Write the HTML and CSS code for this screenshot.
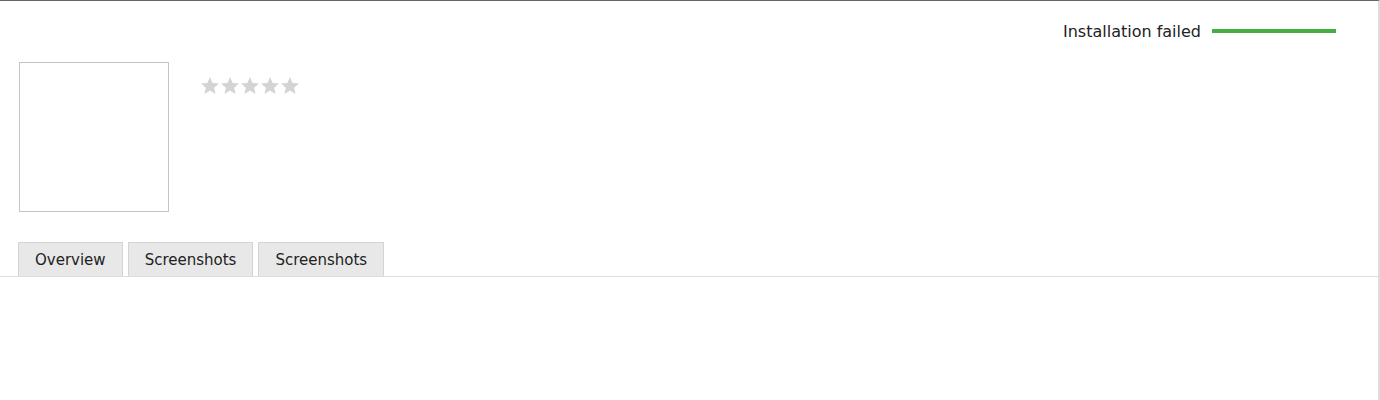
FILE: index.html
```html
<!DOCTYPE html>
<html lang="en">
<head>
    <meta charset="UTF-8">
    <meta name="viewport" content="width=device-width, initial-scale=1.0">
    <title>Package details</title>
    <link rel="stylesheet" href="styles.css">
</head>
<body>
    <div class="page">
        <div class="status">
            <span class="status-text">Installation failed</span>
            <div class="progress"><div class="progress-bar" style="width: 100%"></div></div>
        </div>

        <div class="header">
            <div class="thumb"></div>
            <div class="rating">
                <svg class="star" viewBox="2 2 20 19"><path d="M12 2l2.9 6.6 7.1.6-5.4 4.7 1.6 7-6.2-3.7-6.2 3.7 1.6-7L2 9.2l7.1-.6z"/></svg>
                <svg class="star" viewBox="2 2 20 19"><path d="M12 2l2.9 6.6 7.1.6-5.4 4.7 1.6 7-6.2-3.7-6.2 3.7 1.6-7L2 9.2l7.1-.6z"/></svg>
                <svg class="star" viewBox="2 2 20 19"><path d="M12 2l2.9 6.6 7.1.6-5.4 4.7 1.6 7-6.2-3.7-6.2 3.7 1.6-7L2 9.2l7.1-.6z"/></svg>
                <svg class="star" viewBox="2 2 20 19"><path d="M12 2l2.9 6.6 7.1.6-5.4 4.7 1.6 7-6.2-3.7-6.2 3.7 1.6-7L2 9.2l7.1-.6z"/></svg>
                <svg class="star" viewBox="2 2 20 19"><path d="M12 2l2.9 6.6 7.1.6-5.4 4.7 1.6 7-6.2-3.7-6.2 3.7 1.6-7L2 9.2l7.1-.6z"/></svg>
            </div>
        </div>

        <ul class="tabs">
            <li class="tab">Overview</li>
            <li class="tab">Screenshots</li>
            <li class="tab">Screenshots</li>
        </ul>
        <div class="tab-content"></div>
    </div>
</body>
</html>
```

FILE: styles.css
```css
body {
    margin: 0;
    font-family: "DejaVu Sans", sans-serif;
    color: #222;
    background-color: #fff;
}
.page {
    height: 400px;
    box-sizing: border-box;
    border-top: 1px solid #666;
    border-right: 2px solid #ddd;
}
.status {
    display: flex;
    justify-content: flex-end;
    align-items: center;
    height: 20px;
    padding: 20px 42px 0 0;
}
.status-text {
    font-size: 16px;
    margin-right: 11px;
}
.progress {
    width: 124px;
    height: 4px;
    margin-top: 0;
}
.progress-bar {
    height: 100%;
    background-color: #44ad44;
}
.header {
    display: flex;
    align-items: flex-start;
    padding: 21px 0 0 19px;
}
.thumb {
    width: 148px;
    height: 148px;
    border: 1px solid #c4c4c4;
}
.rating {
    display: flex;
    gap: 2px;
    margin: 15px 0 0 32px;
}
.star {
    width: 18px;
    height: 17px;
    fill: #d4d4d4;
}
.tabs {
    display: flex;
    gap: 5px;
    list-style: none;
    margin: 30px 0 0 0;
    padding: 0 0 0 18px;
    border-bottom: 1px solid #ddd;
}
.tab {
    padding: 2px 16px 0;
    height: 31px;
    line-height: 31px;
    font-size: 15px;
    background-color: #e8e8e8;
    border: 1px solid #d4d4d4;
    border-bottom: none;
}
```
